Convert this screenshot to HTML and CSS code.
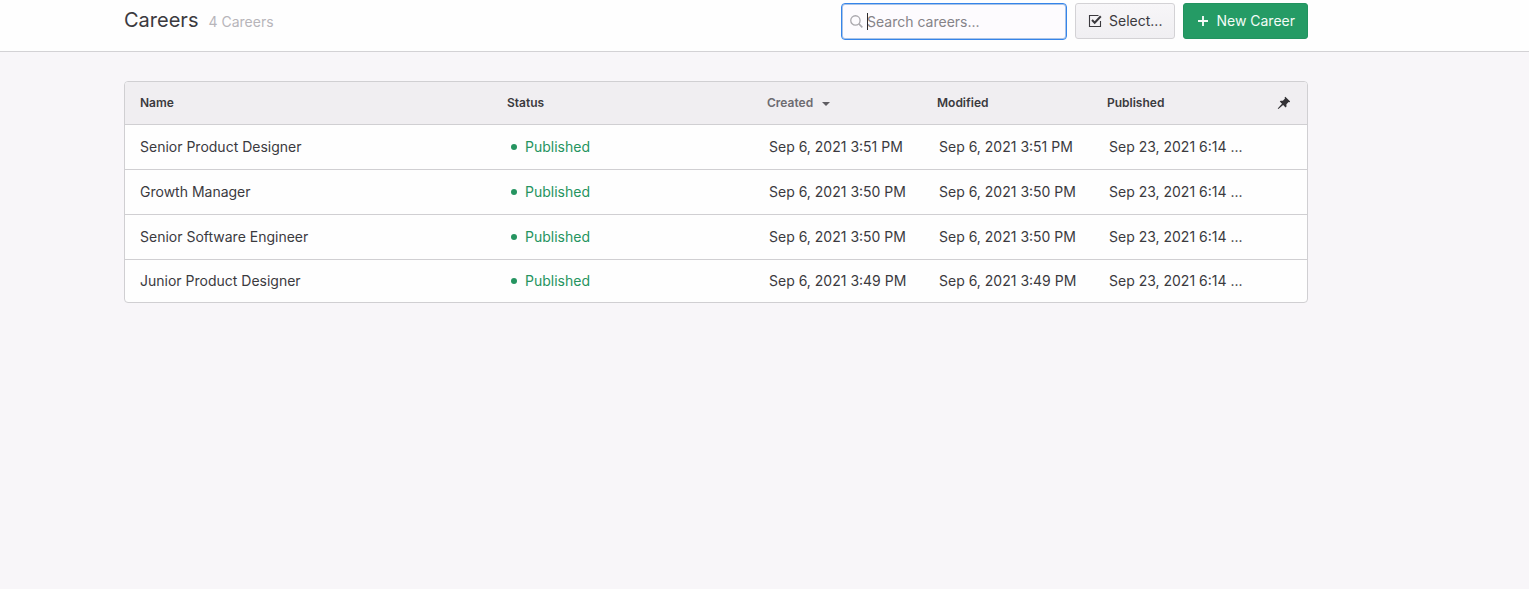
FILE: index.html
```
<!DOCTYPE html>
<html lang="en">
<head>
  <meta charset="UTF-8" />
  <meta name="viewport" content="width=device-width, initial-scale=1.0"/>
  <title>Careers</title>
  <link rel="stylesheet" href="styles.css">
</head>
<body>

  <header class="page-header">
    <h1 class="page-title">Careers</h1>
    <span class="page-count">4 Careers</span>

    <div class="actions">
      <label class="search">
        <svg class="search-icon" viewBox="0 0 12 12" aria-hidden="true">
          <circle cx="5" cy="5" r="4.3" fill="none" stroke="currentColor" stroke-width="1.2"/>
          <path d="M8.2 8.2 L11.4 11.4" stroke="currentColor" stroke-width="1.4"/>
        </svg>
        <span class="caret"></span>
        <input class="search-input" type="text" placeholder="Search careers..." aria-label="Search careers">
      </label>

      <button class="btn btn-select" type="button">
        <svg class="btn-icon" viewBox="0 0 14 14" aria-hidden="true">
          <path d="M10.5 1.5 H1.5 V12.5 H12.5 V7" fill="none" stroke="currentColor" stroke-width="1.1"/>
          <path d="M4 6 L6.7 8.8 L12.8 2.2" fill="none" stroke="currentColor" stroke-width="2"/>
        </svg>
        Select...
      </button>

      <button class="btn btn-new" type="button">
        <svg class="btn-icon" viewBox="0 0 14 14" aria-hidden="true">
          <path d="M7 2 V12 M2 7 H12" stroke="currentColor" stroke-width="1.9"/>
        </svg>
        New Career
      </button>
    </div>
  </header>

  <main class="content">
    <table class="careers">
      <thead>
        <tr>
          <th>Name</th>
          <th class="col-status">Status</th>
          <th class="col-date sorted" aria-sort="descending">Created <span class="arrow"></span></th>
          <th class="col-date">Modified</th>
          <th class="col-date">Published</th>
          <th class="col-pin">
            <button class="pin" type="button" aria-label="Pin columns">
              <svg class="pin-icon" viewBox="0 0 14 14" aria-hidden="true">
                <path d="M8.3 0.8 L13.2 5.6 L12.5 6.3 L11.6 6.1 L9.4 8.3 L9.5 10.6 L8.6 11.4 L6.1 8.9 L1.4 13.1 L0.7 12.5 L5 7.8 L2.8 5.6 L3.6 4.8 L5.9 4.8 L8 2.6 L7.6 1.5 Z" fill="currentColor"/>
              </svg>
            </button>
          </th>
        </tr>
      </thead>
      <tbody>
        <tr>
          <td>Senior Product Designer</td>
          <td><span class="status">Published</span></td>
          <td class="date">Sep 6, 2021 3:51 PM</td>
          <td class="date">Sep 6, 2021 3:51 PM</td>
          <td class="date">Sep 23, 2021 6:14 ...</td>
          <td></td>
        </tr>
        <tr>
          <td>Growth Manager</td>
          <td><span class="status">Published</span></td>
          <td class="date">Sep 6, 2021 3:50 PM</td>
          <td class="date">Sep 6, 2021 3:50 PM</td>
          <td class="date">Sep 23, 2021 6:14 ...</td>
          <td></td>
        </tr>
        <tr>
          <td>Senior Software Engineer</td>
          <td><span class="status">Published</span></td>
          <td class="date">Sep 6, 2021 3:50 PM</td>
          <td class="date">Sep 6, 2021 3:50 PM</td>
          <td class="date">Sep 23, 2021 6:14 ...</td>
          <td></td>
        </tr>
        <tr>
          <td>Junior Product Designer</td>
          <td><span class="status">Published</span></td>
          <td class="date">Sep 6, 2021 3:49 PM</td>
          <td class="date">Sep 6, 2021 3:49 PM</td>
          <td class="date">Sep 23, 2021 6:14 ...</td>
          <td></td>
        </tr>
      </tbody>
    </table>
  </main>

</body>
</html>
```
FILE: styles.css
```
* {
  box-sizing: border-box;
}

body {
  background: #f8f6f9;
  margin: 0;
  font-family: Inter, "Liberation Sans", sans-serif;
  font-size: 14px;
  color: #3b3a3e;
}

.page-header {
  display: flex;
  align-items: baseline;
  gap: 10px;
  padding: 3px 221px 11px 124px;
  background: #fefefe;
  border-bottom: 1px solid #d3d2d5;
}

.page-title {
  margin: 0;
  font-size: 20px;
  font-weight: 400;
}

.page-count {
  color: #b7b5ba;
}

.actions {
  display: flex;
  gap: 8px;
  margin-left: auto;
}

.search {
  position: relative;
  display: flex;
  width: 226px;
}

.search-icon {
  position: absolute;
  left: 9px;
  top: 12px;
  width: 13px;
  height: 13px;
  color: #aaa8ad;
}

/* text cursor of the focused field */
.caret {
  position: absolute;
  left: 26px;
  top: 10px;
  width: 1px;
  height: 17px;
  background: #2b2a2e;
}

.search-input {
  width: 100%;
  height: 37px;
  padding: 0 10px 0 25px;
  border: 1px solid #3584ea;
  border-radius: 4px;
  box-shadow: inset 0 0 0 1px #a9c3e6;
  background: #fdfbfe;
  font: inherit;
  color: inherit;
  outline: none;
}

.search-input::placeholder {
  color: #858388;
  opacity: 1;
}

.btn {
  display: flex;
  align-items: center;
  gap: 7px;
  height: 36px;
  padding: 0 12px 1px;
  border: 1px solid #d3d2d5;
  border-radius: 3px;
  font: inherit;
  cursor: pointer;
}

.btn-icon {
  width: 14px;
  height: 14px;
}

.btn-select {
  background: linear-gradient(#f7f6f8, #f0eff2);
  color: #3b3a3e;
}

.btn-new {
  gap: 6px;
  background: #259b65;
  border-color: #22935f;
  color: #f4fbf7;
}

.content {
  padding: 29px 221px 29px 124px;
}

.careers {
  width: 100%;
  table-layout: fixed;
  border: 1px solid #d0cfd2;
  border-radius: 4px;
  border-spacing: 0;
  background: #fefefe;
  overflow: hidden;
}

.careers th {
  height: 43px;
  padding: 0 0 1px 15px;
  background: #f0eef1;
  border-bottom: 1px solid #d0cfd2;
  font-size: 12px;
  font-weight: 600;
  text-align: left;
}

.careers td {
  height: 45px;
  padding: 0 0 1px 15px;
  border-bottom: 1px solid #d0cfd2;
  white-space: nowrap;
}

.careers tr:last-child td {
  height: 42px;
  border-bottom: 0;
}

.careers .date {
  padding-left: 17px;
}

.col-status {
  width: 260px;
}

.col-date {
  width: 170px;
}

.col-pin {
  width: 45px;
}

.careers .sorted {
  color: #6d6b70;
}

.arrow {
  display: inline-block;
  margin-left: 6px;
  border: 4px solid transparent;
  border-top-color: #5f5d62;
  border-bottom: 0;
  vertical-align: middle;
}

.pin {
  display: block;
  padding: 0;
  border: 0;
  background: none;
  color: #333236;
  cursor: pointer;
}

.pin-icon {
  display: block;
  width: 14px;
  height: 14px;
}

.status {
  display: flex;
  align-items: center;
  gap: 8px;
  padding-left: 4px;
  color: #259460;
}

.status::before {
  content: "";
  width: 6px;
  height: 6px;
  border-radius: 50%;
  background: #259460;
}
```
